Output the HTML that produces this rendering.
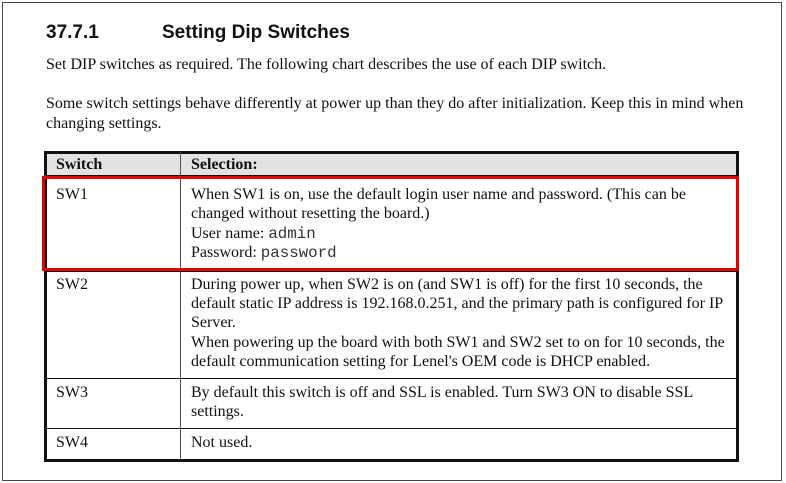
<!DOCTYPE html>
<html><head><style>
body{margin:0;width:786px;height:483px;background:#fff;position:relative;overflow:hidden;font-family:"Liberation Serif",serif;font-size:16px;color:#111}
.a{position:absolute;white-space:nowrap;line-height:19.5px}
.h{position:absolute;background:#111}
.m{font-family:"Liberation Mono",monospace;font-size:15.8px;color:#333}
</style></head><body>
<div style="position:absolute;left:2px;top:2px;width:778px;height:477px;border:1px solid #444"></div>
<div class="a" style="left:46px;top:22px;font-family:'Liberation Sans',sans-serif;font-weight:bold;font-size:19px;line-height:22px">37.7.1</div>
<div class="a" style="left:162px;top:22px;font-family:'Liberation Sans',sans-serif;font-weight:bold;font-size:19px;line-height:22px">Setting Dip Switches</div>
<div class="a" style="left:46px;top:55px">Set DIP switches as required. The following chart describes the use of each DIP switch.</div>
<div class="a" style="left:46px;top:94px">Some switch settings behave differently at power up than they do after initialization. Keep this in mind when</div>
<div class="a" style="left:46px;top:114px">changing settings.</div>
<div style="position:absolute;left:46px;top:154px;width:690px;height:22px;background:#e2e2e2"></div>
<div class="h" style="left:44px;top:151px;width:695px;height:3px"></div>
<div class="h" style="left:44px;top:151px;width:3px;height:311px"></div>
<div class="h" style="left:736px;top:151px;width:3px;height:311px"></div>
<div class="h" style="left:44px;top:459px;width:695px;height:3px"></div>
<div class="h" style="left:44px;top:175px;width:695px;height:3px"></div>
<div class="h" style="left:180px;top:152px;width:1px;height:308px;background:#555"></div>
<div class="h" style="left:44px;top:271px;width:695px;height:1px"></div>
<div class="h" style="left:44px;top:378px;width:695px;height:1px"></div>
<div class="h" style="left:44px;top:428px;width:695px;height:1px"></div>
<div class="a" style="left:56px;top:155px;font-weight:bold">Switch</div>
<div class="a" style="left:191px;top:155px;font-weight:bold">Selection:</div>
<div class="a" style="left:56px;top:185px">SW1</div>
<div class="a" style="left:191px;top:185px">When SW1 is on, use the default login user name and password. (This can be</div>
<div class="a" style="left:191px;top:204px">changed without resetting the board.)</div>
<div class="a" style="left:191px;top:224px">User name: <span class="m">admin</span></div>
<div class="a" style="left:191px;top:243px">Password: <span class="m">password</span></div>
<div class="a" style="left:56px;top:275px">SW2</div>
<div class="a" style="left:191px;top:275px">During power up, when SW2 is on (and SW1 is off) for the first 10 seconds, the</div>
<div class="a" style="left:191px;top:294px">default static IP address is 192.168.0.251, and the primary path is configured for IP</div>
<div class="a" style="left:191px;top:313px">Server.</div>
<div class="a" style="left:191px;top:333px">When powering up the board with both SW1 and SW2 set to on for 10 seconds, the</div>
<div class="a" style="left:191px;top:352px">default communication setting for Lenel's OEM code is DHCP enabled.</div>
<div class="a" style="left:56px;top:383px">SW3</div>
<div class="a" style="left:191px;top:383px">By default this switch is off and SSL is enabled. Turn SW3 ON to disable SSL</div>
<div class="a" style="left:191px;top:402px">settings.</div>
<div class="a" style="left:56px;top:433px">SW4</div>
<div class="a" style="left:191px;top:433px">Not used.</div>
<div style="position:absolute;left:42px;top:176px;width:691px;height:89px;border:3px solid #e00000"></div>
</body></html>
